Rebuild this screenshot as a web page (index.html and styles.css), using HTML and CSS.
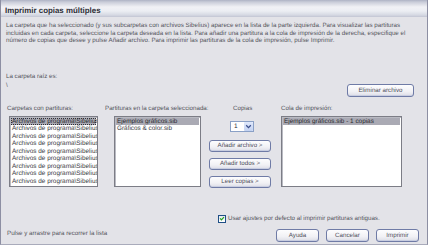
FILE: index.html
```html
<!DOCTYPE html>
<html lang="es">
<head>
<meta charset="utf-8">
<title>Imprimir copias múltiples</title>
<link rel="stylesheet" href="styles.css">
</head>
<body>
<div class="dialog">
  <div class="titlebar">Imprimir copias múltiples</div>
  <div class="content">
    <p class="intro">La carpeta que ha seleccionado (y sus subcarpetas con archivos Sibelius) aparece en la lista de la parte izquierda. Para visualizar las partituras<br>incluidas en cada carpeta, seleccione la carpeta deseada en la lista. Para añadir una partitura a la cola de impresión de la derecha, especifique el<br>número de copias que desee y pulse Añadir archivo. Para imprimir las partituras de la cola de impresión, pulse Imprimir.</p>
    <div class="root-label">La carpeta raíz es:</div>
    <div class="root-row">
      <span class="root-path">\</span>
      <button class="btn btn-remove">Eliminar archivo</button>
    </div>
    <div class="lists">
      <div class="col col-folders">
        <div class="label label-folders">Carpetas con partituras:</div>
        <ul class="list">
          <li class="item selected focus">Archivos de programa\Sibelius</li>
          <li class="item">Archivos de programa\Sibelius</li>
          <li class="item">Archivos de programa\Sibelius</li>
          <li class="item">Archivos de programa\Sibelius</li>
          <li class="item">Archivos de programa\Sibelius</li>
          <li class="item">Archivos de programa\Sibelius</li>
          <li class="item">Archivos de programa\Sibelius</li>
          <li class="item">Archivos de programa\Sibelius</li>
          <li class="item">Archivos de programa\Sibelius</li>
        </ul>
      </div>
      <div class="col col-scores">
        <div class="label label-scores">Partituras en la carpeta seleccionada:</div>
        <ul class="list">
          <li class="item selected">Ejemplos gráficos.sib</li>
          <li class="item">Gráficos &amp; color.sib</li>
        </ul>
      </div>
      <div class="col col-actions">
        <div class="label label-copies">Copias</div>
        <div class="spinner">
          <span class="spin-value">1</span>
          <span class="spin-arrow"><svg width="7" height="7" viewBox="0 0 7 7"><path d="M1.2 2.3 L3.5 4.6 L5.8 2.3" fill="none" stroke="#3b4f8c" stroke-width="1.3"/></svg></span>
        </div>
        <button class="btn btn-action btn-first">Añadir archivo &gt;</button>
        <button class="btn btn-action">Añadir todos &gt;</button>
        <button class="btn btn-action">Leer copias &gt;</button>
      </div>
      <div class="col col-queue">
        <div class="label">Cola de impresión:</div>
        <ul class="list">
          <li class="item selected">Ejemplos gráficos.sib - 1 copias</li>
        </ul>
      </div>
    </div>
    <div class="check-row">
      <span class="checkbox"><svg width="7" height="7" viewBox="0 0 7 7"><path d="M1.2 3.4 L2.8 5 L5.8 1.8" fill="none" stroke="#21a121" stroke-width="1.4"/></svg></span>
      <span class="check-label">Usar ajustes por defecto al imprimir partituras antiguas.</span>
    </div>
    <div class="footer">
      <span class="hint">Pulse y arrastre para recorrer la lista</span>
      <div class="footer-buttons">
        <button class="btn btn-footer">Ayuda</button>
        <button class="btn btn-footer">Cancelar</button>
        <button class="btn btn-footer">Imprimir</button>
      </div>
    </div>
  </div>
</div>
</body>
</html>
```
FILE: styles.css
```css
html, body {
  margin: 0;
  padding: 0;
}
body {
  width: 428px;
  height: 245px;
  overflow: hidden;
  background: #e3e3e8;
  font-family: "Liberation Sans", Arial, sans-serif;
  font-size: 6.2px;
  color: #55555d;
  text-rendering: geometricPrecision;
}
.dialog {
  box-sizing: border-box;
  width: 428px;
  height: 245px;
  border-left: 1px solid #8d8fa3;
  border-right: 1px solid #8d8fa3;
  border-bottom: 1px solid #a9abbb;
  background: #e3e3e8;
}
.titlebar {
  height: 13px;
  padding-top: 4px;
  padding-left: 4px;
  line-height: 13px;
  font-weight: bold;
  font-size: 7.9px;
  color: #2e2e36;
  background: linear-gradient(#aeb2c4 0px, #c9ccd8 2px, #f1f1f5 7px, #eceef3 11px, #d6d9e3 15px, #c2c5d3 17px);
}
.content {
  padding: 5px 8px 0 5px;
}
.intro {
  margin: 0;
  line-height: 7.5px;
  white-space: nowrap;
}
.root-label {
  margin-top: 28px;
  line-height: 8px;
}
.root-row {
  display: flex;
  justify-content: space-between;
  align-items: flex-start;
  height: 16px;
}
.root-path {
  margin-top: 1px;
  line-height: 8px;
}
.btn {
  box-sizing: border-box;
  margin: 0;
  padding: 0;
  font-family: "Liberation Sans", Arial, sans-serif;
  font-size: 6.2px;
  color: #4e4e5a;
  border: 1px solid #6f7ba6;
  border-radius: 3px;
  background: linear-gradient(#fdfdfe, #f1f1f5 60%, #dcdde6);
  box-shadow: inset 0 -1px 0 #c8cde0;
  white-space: nowrap;
  text-rendering: geometricPrecision;
}
.btn-remove {
  margin-top: 3px;
  margin-right: 5px;
  width: 67px;
  height: 13px;
}
.lists {
  display: flex;
  margin-top: 8px;
  margin-left: 3px;
}
.col {
  display: flex;
  flex-direction: column;
}
.col-folders { width: 89px; }
.col-scores { width: 87px; margin-left: 16px; }
.col-actions { width: 62px; margin-left: 8px; }
.col-queue { width: 121px; margin-left: 10px; }
.label {
  height: 8px;
  line-height: 8px;
  margin-bottom: 3px;
  white-space: nowrap;
}
.label-folders { margin-left: -2px; }
.label-scores { margin-left: -9px; }
.label-copies { margin-left: 24px; }
.list {
  box-sizing: border-box;
  list-style: none;
  margin: 0;
  padding: 1px;
  height: 71px;
  background: #ffffff;
  border: 1px solid #7c7d86;
  box-shadow: inset 1px 1px 0 #b9bac2;
  overflow: hidden;
}
.item {
  height: 7.5px;
  line-height: 7.5px;
  padding-left: 1px;
  white-space: nowrap;
  font-size: 6.4px;
  color: #3c3c44;
}
.selected {
  background: #aaaab4;
  color: #2a2a30;
}
.focus {
  outline: 1px dotted #303036;
  outline-offset: -1px;
}
.spinner {
  box-sizing: border-box;
  display: flex;
  align-items: center;
  justify-content: space-between;
  width: 24px;
  height: 11px;
  margin-top: 5px;
  margin-left: 21px;
  background: #ffffff;
  border: 1px solid #8aa0c6;
}
.spin-value {
  padding-left: 3px;
  font-size: 6.5px;
  color: #2e2e36;
}
.spin-arrow {
  display: flex;
  align-items: center;
  justify-content: center;
  width: 9px;
  height: 9px;
  background: linear-gradient(#dfe8fb, #c3d2f2);
  border-radius: 1px;
}
.btn-action {
  width: 62px;
  height: 12px;
  margin-top: 6px;
}
.btn-first {
  margin-top: 8px;
}
.check-row {
  display: flex;
  align-items: center;
  height: 8px;
  margin-top: 27px;
  margin-left: 212px;
}
.checkbox {
  box-sizing: border-box;
  display: flex;
  align-items: center;
  justify-content: center;
  width: 8px;
  height: 8px;
  background: linear-gradient(#e6e9ef, #ffffff);
  border: 1px solid #1f4f86;
}
.check-label {
  margin-left: 2px;
  line-height: 8px;
}
.footer {
  display: flex;
  justify-content: space-between;
  align-items: center;
  margin-top: 6px;
}
.hint {
  margin-left: 1px;
  margin-top: -3px;
}
.footer-buttons {
  display: flex;
  gap: 7px;
}
.btn-footer {
  width: 43px;
  height: 13px;
}
```
